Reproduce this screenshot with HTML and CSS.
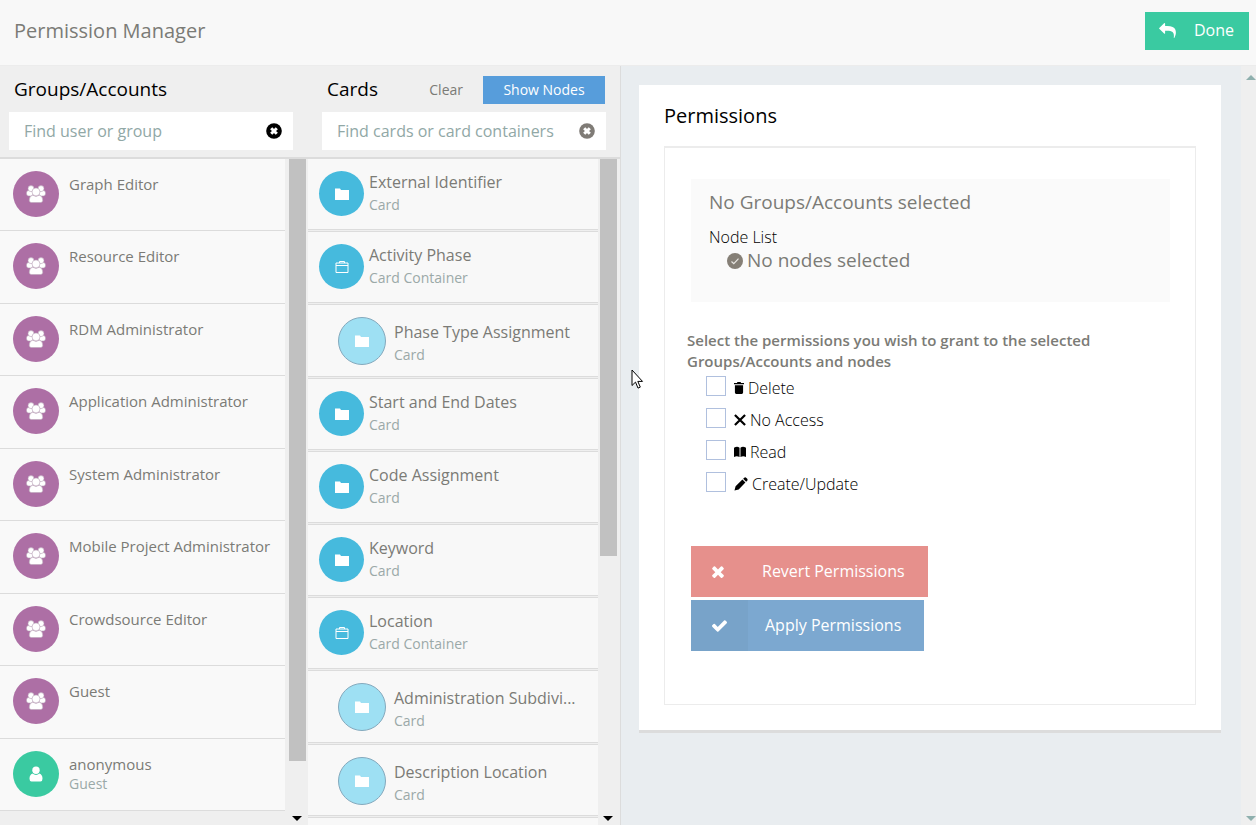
FILE: index.html
```html
<!DOCTYPE html>
<html lang="en">
<head>
<meta charset="utf-8">
<title>Permission Manager</title>
<link rel="stylesheet" href="styles.css">
</head>
<body>
<svg class="defs" aria-hidden="true">
  <symbol id="i-group" viewBox="0 0 20 18">
    <g fill="#fff" stroke="#b9a3b7" stroke-width="0.6">
      <rect x="0.5" y="5.500" width="6.500" height="5.500" rx="2.200"/><rect x="13" y="5.500" width="6.500" height="5.500" rx="2.200"/>
      <circle cx="5" cy="3.600" r="3"/><circle cx="15" cy="3.600" r="3"/>
      <path d="M6.400 10.200q3.600 2.200 7.200 0q3.200 1.200 3.200 5q0 2.400-2.200 2.400h-9.200q-2.200 0-2.200-2.400q0-3.800 3.200-5z"/>
      <circle cx="10" cy="6.900" r="4"/>
    </g>
  </symbol>
  <symbol id="i-user" viewBox="0 0 14 16">
    <path fill="#fff" d="M3.500 7.600q3.500 2.600 7 0q3 1.200 3 5.200q0 2.700-2 2.700h-9q-2 0-2-2.700q0-4 3-5.200z"/><circle fill="#fff" cx="7" cy="4.200" r="3.700"/>
  </symbol>
  <symbol id="i-folder" viewBox="0 0 14 12"><path fill="#fff" d="M0 .5h5l1 1.500h8v10h-14z"/></symbol>
  <symbol id="i-case" viewBox="0 0 14 13">
    <path fill="none" stroke="#fff" d="M1 3h12v9.500h-12zM1 5.500h12M4.500 3v-1.500h5v1.500"/>
  </symbol>
  <symbol id="i-clear" viewBox="0 0 16 16">
    <circle cx="8" cy="8" r="7.800" fill="currentColor"/><path d="M5.200 5.200l5.600 5.600M10.800 5.200l-5.600 5.600" stroke="#fff" stroke-width="3"/>
  </symbol>
  <symbol id="i-times" viewBox="302 238 1188 1316">
    <path fill="currentColor" d="M1490 1322q0 40-28 68l-136 136q-28 28-68 28t-68-28l-294-294-294 294q-28 28-68 28t-68-28l-136-136q-28-28-28-68t28-68l294-294-294-294q-28-28-28-68t28-68l136-136q28-28 68-28t68 28l294 294 294-294q28-28 68-28t68 28l136 136q28 28 28 68t-28 68l-294 294 294 294q28 28 28 68z"/>
  </symbol>
  <symbol id="i-check" viewBox="121 334 1550 1188">
    <path fill="currentColor" d="M1671 566q0 40-28 68l-724 724-136 136q-28 28-68 28t-68-28l-136-136-362-362q-28-28-28-68t28-68l136-136q28-28 68-28t68 28l294 295 656-657q28-28 68-28t68 28l136 136q28 28 28 68z"/>
  </symbol>
  <symbol id="i-reply" viewBox="0 64 1792 1600">
    <path fill="currentColor" transform="translate(1792 0) scale(-1 1)" d="M1792 640q0 26-19 45l-512 512q-19 19-45 19t-45-19-19-45v-256h-224q-98 0-175.500 6t-154 21.500-133 42.500-105.500 69.500-80 101-48.500 138.500-17.500 181q0 55 5 123 0 6 2.500 23.500t2.500 26.500q0 15-8.500 25t-23.500 10q-16 0-28-17-7-9-13-22t-13.500-30-10.500-24q-127-285-127-451 0-199 53-333 162-403 875-403h224v-256q0-26 19-45t45-19 45 19l512 512q19 19 19 45z"/>
  </symbol>
</svg>

<header class="topbar">
  <h1 class="title">Permission Manager</h1>
  <button class="done" type="button"><svg width="17" height="15"><use href="#i-reply"/></svg>Done</button>
</header>

<div class="workspace">
  <section class="column groups">
    <div class="column-head">
      <div class="head-row"><h2>Groups/Accounts</h2></div>
      <div class="search">
        <input type="text" aria-label="Find user or group" placeholder="Find user or group">
        <button class="clear-icon dark" type="button" aria-label="Clear search"><svg width="16" height="16"><use href="#i-clear"/></svg></button>
      </div>
    </div>
    <div class="scroll">
      <ul class="list group-list">
        <li><span class="avatar"><svg width="20" height="18"><use href="#i-group"/></svg></span><span class="label">Graph Editor</span></li>
        <li><span class="avatar"><svg width="20" height="18"><use href="#i-group"/></svg></span><span class="label">Resource Editor</span></li>
        <li><span class="avatar"><svg width="20" height="18"><use href="#i-group"/></svg></span><span class="label">RDM Administrator</span></li>
        <li><span class="avatar"><svg width="20" height="18"><use href="#i-group"/></svg></span><span class="label">Application Administrator</span></li>
        <li><span class="avatar"><svg width="20" height="18"><use href="#i-group"/></svg></span><span class="label">System Administrator</span></li>
        <li><span class="avatar"><svg width="20" height="18"><use href="#i-group"/></svg></span><span class="label">Mobile Project Administrator</span></li>
        <li><span class="avatar"><svg width="20" height="18"><use href="#i-group"/></svg></span><span class="label">Crowdsource Editor</span></li>
        <li><span class="avatar"><svg width="20" height="18"><use href="#i-group"/></svg></span><span class="label">Guest</span></li>
        <li><span class="avatar user"><svg width="14" height="16"><use href="#i-user"/></svg></span><span class="label">anonymous<small>Guest</small></span></li>
      </ul>
      <div class="bar"><div class="thumb tall"></div><i class="arrow down"></i></div>
    </div>
  </section>

  <section class="column cards">
    <div class="column-head">
      <div class="head-row"><h2>Cards</h2><button class="clear" type="button">Clear</button><button class="show" type="button">Show Nodes</button></div>
      <div class="search">
        <input type="text" aria-label="Find cards or card containers" placeholder="Find cards or card containers">
        <button class="clear-icon" type="button" aria-label="Clear search"><svg width="16" height="16"><use href="#i-clear"/></svg></button>
      </div>
    </div>
    <div class="scroll">
      <ul class="list card-list">
        <li><span class="avatar"><svg width="14" height="12"><use href="#i-folder"/></svg></span><span class="label">External Identifier<small>Card</small></span></li>
        <li><span class="avatar"><svg width="14" height="13"><use href="#i-case"/></svg></span><span class="label">Activity Phase<small>Card Container</small></span></li>
        <li class="child"><span class="avatar"><svg width="14" height="12"><use href="#i-folder"/></svg></span><span class="label">Phase Type Assignment<small>Card</small></span></li>
        <li><span class="avatar"><svg width="14" height="12"><use href="#i-folder"/></svg></span><span class="label">Start and End Dates<small>Card</small></span></li>
        <li><span class="avatar"><svg width="14" height="12"><use href="#i-folder"/></svg></span><span class="label">Code Assignment<small>Card</small></span></li>
        <li><span class="avatar"><svg width="14" height="12"><use href="#i-folder"/></svg></span><span class="label">Keyword<small>Card</small></span></li>
        <li><span class="avatar"><svg width="14" height="13"><use href="#i-case"/></svg></span><span class="label">Location<small>Card Container</small></span></li>
        <li class="child"><span class="avatar"><svg width="14" height="12"><use href="#i-folder"/></svg></span><span class="label">Administration Subdivi...<small>Card</small></span></li>
        <li class="child"><span class="avatar"><svg width="14" height="12"><use href="#i-folder"/></svg></span><span class="label">Description Location<small>Card</small></span></li>
        <li class="child"></li>
      </ul>
      <div class="bar"><div class="thumb"></div><i class="arrow down"></i></div>
    </div>
  </section>

  <main class="main">
    <section class="panel">
      <h2>Permissions</h2>
      <div class="frame">
        <div class="summary">
          <p class="big">No Groups/Accounts selected</p>
          <p class="node-list">Node List</p>
          <p class="big none"><svg width="16" height="16" viewBox="0 0 16 16"><circle cx="8" cy="8" r="8" fill="#857f76"/><path d="M4.500 8.500l2.300 2.200 4.700-5" fill="none" stroke="#e8e6e2" stroke-width="1.200"/></svg>No nodes selected</p>
        </div>
        <fieldset class="perms">
          <legend>Select the permissions you wish to grant to the selected Groups/Accounts and nodes</legend>
          <label><input type="checkbox"><svg width="10" height="12" viewBox="0 0 11 13"><path d="M0 1h3.500v-1h4v1h3.500v1.500h-11zM1 3.500h9v8q0 1.500-1.500 1.500h-6q-1.500 0-1.500-1.500z"/></svg>Delete</label>
          <label><input type="checkbox"><svg width="12" height="12" viewBox="0 0 13 13"><path d="M1 1l11 11M12 1l-11 11" stroke="#000" stroke-width="2.400"/></svg>No Access</label>
          <label><input type="checkbox"><svg width="12" height="12" viewBox="0 0 13 12"><path d="M0 1.500q3.500-2.500 6 0v10q-3-2-6 0zM7 1.500q2.500-2.500 6 0v10q-3-2-6 0z"/></svg>Read</label>
          <label><input type="checkbox"><svg width="14" height="14" viewBox="0 0 15 15"><path d="M.500 14.500l1.200-4.500 7.300-7.200 3.200 3.200-7.200 7.300zM9.800 2l1.200-1.200q1-.800 2 0l1.200 1.200q.800 1 0 2l-1.200 1.200z"/></svg>Create/Update</label>
        </fieldset>
        <div class="actions">
          <button class="revert" type="button"><span class="action-icon"><svg width="12" height="13"><use href="#i-times"/></svg></span><span class="action-text">Revert Permissions</span></button>
          <button class="apply" type="button"><span class="action-icon"><svg width="15" height="12"><use href="#i-check"/></svg></span><span class="action-text">Apply Permissions</span></button>
        </div>
      </div>
    </section>
    <div class="page-bar"><i class="arrow up"></i><i class="arrow down"></i></div>
  </main>
</div>
<svg class="pointer" width="13" height="21" viewBox="0 0 13 21" aria-hidden="true"><path d="M1 1v15.500l3.500-3.400 2.500 6 2.300-1-2.500-5.700h4.700z" fill="#fff" stroke="#000"/></svg>
</body>
</html>
```
FILE: styles.css
```css
* { box-sizing: border-box; }
body {
  margin: 0;
  height: 100vh;
  overflow: hidden;
  display: flex;
  flex-direction: column;
  font-family: "Open Sans", sans-serif;
  font-size: 15px;
  color: #7b7b76;
  background: #e9edf0;
}
h1, h2, p, ul, fieldset, legend { margin: 0; padding: 0; border: 0; font-weight: 400; }
button, input { font: inherit; border: 0; padding: 0; margin: 0; border-radius: 0; }
svg { display: block; flex: none; }
.defs { position: absolute; width: 0; height: 0; }

.topbar {
  height: 65px;
  flex: none;
  display: flex;
  align-items: flex-start;
  justify-content: space-between;
  padding: 12px 7px 0 14px;
  background: #f8f8f8;
}
.title { font-size: 20px; line-height: 38px; }
.done {
  display: flex;
  align-items: center;
  gap: 18px;
  height: 38px;
  padding: 0 15px 2px 14px;
  font-size: 16px;
  color: #fff;
  background: #3acaa1;
}

.workspace { flex: 1; min-height: 0; display: flex; border-top: 1px solid #ececec; }
.column { display: flex; flex-direction: column; background: #efefef; flex: none; }
.groups { width: 308px; }
.cards { width: 313px; border-right: 1px solid #dcdcdc; }
.column-head { height: 91px; flex: none; padding: 6px 15px 0 9px; }
.cards .column-head { padding: 6px 14px 0 14px; }
.head-row { display: flex; align-items: center; height: 34px; padding-left: 5px; }
h2 { font-size: 19px; color: #000; }
.head-row h2 { flex: 1; line-height: 34px; }
.clear { font-size: 14px; color: #7b7b76; background: none; margin-right: 20px; }
.show { width: 122px; height: 28px; margin: 2px 1px 0 0; padding-bottom: 2px; font-size: 14px; color: #fff; background: #579ddb; }
.search { display: flex; align-items: center; height: 38px; margin-top: 6px; padding: 0 11px 0 15px; background: #fff; }
.search input { flex: 1; min-width: 0; height: 38px; font-size: 16px; background: none; }
.search input::placeholder { color: #91a8a6; opacity: 1; }
.clear-icon { color: #7f7b76; background: none; }
.clear-icon.dark { color: #000; }

.scroll { flex: 1; min-height: 0; display: flex; border-top: 2px solid #dcdcdc; }
.list { flex: 1; min-width: 0; list-style: none; overflow: hidden; }
.list li { display: flex; align-items: flex-start; background: #f9f9f9; }
.avatar { flex: none; display: flex; align-items: center; justify-content: center; border-radius: 50%; }
.group-list li { height: 72px; padding: 12px 13px; gap: 10px; border-bottom: 1px solid #dcdcdc; }
.group-list li:nth-child(even) { height: 73px; }
.group-list .avatar { width: 46px; height: 46px; background: #ad6fa5; }
.group-list .avatar.user { background: #3acaa1; }
.label { display: block; font-size: 15px; line-height: 20px; white-space: nowrap; padding-top: 3px; }
.label small { display: block; font-size: 14px; color: #9ba9a8; }
.card-list li { height: 72px; margin-bottom: 1px; padding: 12px 11px 0; gap: 5px; border-top: 1px solid #dcdcdc; border-bottom: 1px solid #dcdcdc; background: #f8f8f8; }
.card-list li:first-child { height: 71px; border-top: 0; }
.card-list li:nth-child(5n+3) { height: 73px; }
.card-list .avatar { width: 45px; height: 45px; background: #46badd; }
.card-list .label { font-size: 16px; line-height: 23px; padding-top: 0; }
.card-list .label small { line-height: 22px; }
.card-list .child { padding-left: 30px; gap: 8px; }
.card-list .child .avatar { width: 48px; height: 48px; background: #9ee0f3; border: 1px solid #84a9bd; }
.card-list .child .label { padding-top: 4px; }

.bar { width: 23px; flex: none; display: flex; flex-direction: column; justify-content: space-between; align-items: flex-end; padding: 0 2px 4px 0; background: #efefef; }
.thumb { width: 17px; height: 60%; background: #c1c1c1; }
.thumb.tall { height: 91%; }
.cards .bar { width: 22px; padding-right: 3px; }
.arrow { width: 0; height: 0; margin-right: 4px; border: 5px solid transparent; }
.arrow.down { border-bottom: 0; border-top-color: #000; }
.arrow.up { border-top: 0; border-bottom-color: #8fb0ae; }

.main { flex: 1; min-width: 0; display: flex; }
.panel { flex: 1; align-self: flex-start; margin: 19px 20px 0 18px; padding: 16px 25px 25px; background: #fff; border-bottom: 3px solid #dcdcdc; }
.panel h2 { font-size: 20px; line-height: 30px; }
.frame { margin-top: 15px; padding: 31px 25px 53px 26px; border: 1px solid #ececec; border-top-width: 2px; }
.summary { padding: 9px 19px 30px 18px; background: #fafafa; }
.big { font-size: 19px; line-height: 28px; }
.node-list { margin-top: 9px; font-size: 16px; line-height: 24px; font-weight: 300; color: #000; }
.none { display: flex; align-items: center; gap: 4px; padding-left: 18px; line-height: 23px; }
.perms { margin-top: 28px; }
.perms legend { margin-left: -4px; padding-right: 60px; font-size: 15px; font-weight: 600; line-height: 21px; }
.perms label { display: flex; align-items: center; height: 32px; padding-left: 15px; gap: 4px; font-size: 16px; font-weight: 300; color: #000; }
.perms input { appearance: none; width: 20px; height: 20px; margin: 0 4px 4px 0; border: 1px solid #b0c0de; background: #fff; }
.actions { display: flex; flex-direction: column; align-items: flex-start; gap: 3px; margin-top: 46px; }
.actions button { display: flex; align-items: stretch; height: 51px; color: #fff; font-size: 16px; line-height: 50px; }
.action-icon { display: flex; align-items: center; justify-content: center; width: 57px; }
.action-text { padding: 0 23px 0 17px; }
.revert { background: #e6908c; }
.revert .action-icon { width: 54px; }
.apply { background: #7ca8d0; }
.apply .action-icon { background: #78a3c9; }
.page-bar { width: 15px; flex: none; display: flex; flex-direction: column; justify-content: space-between; align-items: flex-end; padding: 9px 0 4px; background: #efefef; }
.page-bar .arrow { margin-right: 0; }
.page-bar .arrow.down { border-top-color: #8fb0ae; }
.pointer { position: absolute; left: 631px; top: 369px; }
```
